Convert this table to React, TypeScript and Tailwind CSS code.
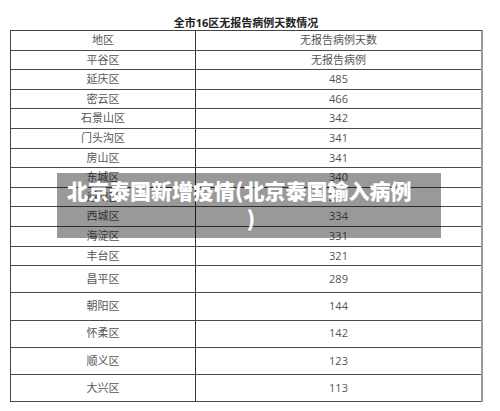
import React from 'react';

const rows: { area: string; days: string; tall?: boolean }[] = [
  { area: '地区', days: '无报告病例天数' },
  { area: '平谷区', days: '无报告病例' },
  { area: '延庆区', days: '485' },
  { area: '密云区', days: '466' },
  { area: '石景山区', days: '342' },
  { area: '门头沟区', days: '341' },
  { area: '房山区', days: '341' },
  { area: '东城区', days: '340' },
  { area: '通州区', days: '336' },
  { area: '西城区', days: '334' },
  { area: '海淀区', days: '331' },
  { area: '丰台区', days: '321' },
  { area: '昌平区', days: '289', tall: true },
  { area: '朝阳区', days: '144', tall: true },
  { area: '怀柔区', days: '142', tall: true },
  { area: '顺义区', days: '123', tall: true },
  { area: '大兴区', days: '113', tall: true },
];

const cjk = { fontFamily: '"Open Sans", "Noto Sans CJK SC", sans-serif' };

export default function App() {
  return (
    <div className="relative w-[500px] h-[411px] bg-white overflow-hidden" style={cjk}>
      <div className="pt-[16px]">
        <p className="h-[14px] leading-[14px] text-center text-[11px] font-bold text-[#222] pr-[8px]">
          全市16区无报告病例天数情况
        </p>

        {/* table */}
        <div className="ml-[10px] w-[473px] border-t border-l border-[#444] border-r-2 border-r-[#9a9a9a]">
          {rows.map((r) => (
            <div
              key={r.area}
              className={`flex border-b border-[#4a4a4a] text-[11px] text-[#555] ${
                r.tall ? 'h-[27.2px]' : 'h-[19.6px]'
              }`}
            >
              <div className="w-[185px] flex items-center justify-center border-r border-[#333]">
                {r.area}
              </div>
              <div className="flex-1 flex items-center justify-center">{r.days}</div>
            </div>
          ))}
        </div>
      </div>

      {/* headline overlay */}
      <div
        className="absolute left-[57px] top-[173px] w-[384px] h-[65px] bg-black/40 pt-[3px] text-white font-black text-[21px] leading-[28px]"
        style={{ fontFamily: '"Noto Sans CJK SC", sans-serif' }}
      >
        <div className="pl-[10px] whitespace-nowrap">北京泰国新增疫情(北京泰国输入病例</div>
        <div className="text-center pl-[4px]">)</div>
      </div>
    </div>
  );
}
